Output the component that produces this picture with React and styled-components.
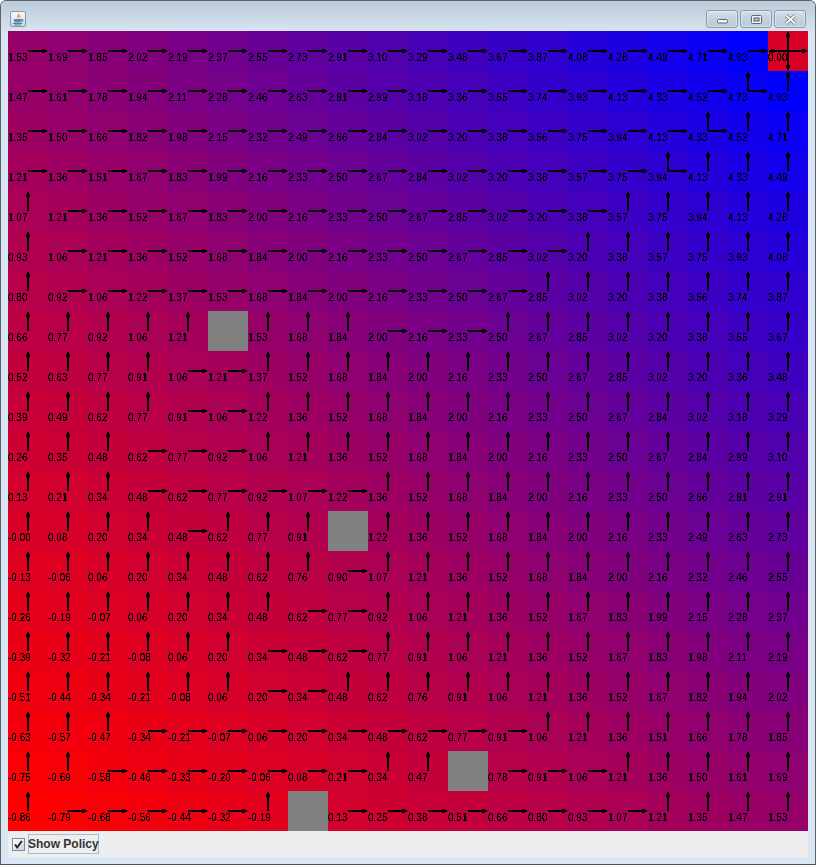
import React from "react";
import styled, { createGlobalStyle } from "styled-components";

const GlobalStyle = createGlobalStyle`
  html, body { margin: 0; padding: 0; background: #fff; }
  * { box-sizing: border-box; }
`;

const VALUES = `
1.53 1.69 1.85 2.02 2.19 2.37 2.55 2.73 2.91 3.10 3.29 3.48 3.67 3.87 4.08 4.28 4.49 4.71 4.93 0.00
1.47 1.61 1.78 1.94 2.11 2.28 2.46 2.63 2.81 2.99 3.18 3.36 3.55 3.74 3.93 4.13 4.33 4.52 4.73 4.93
1.35 1.50 1.66 1.82 1.98 2.15 2.32 2.49 2.66 2.84 3.02 3.20 3.38 3.56 3.75 3.94 4.13 4.33 4.52 4.71
1.21 1.36 1.51 1.67 1.83 1.99 2.16 2.33 2.50 2.67 2.84 3.02 3.20 3.38 3.57 3.75 3.94 4.13 4.33 4.49
1.07 1.21 1.36 1.52 1.67 1.83 2.00 2.16 2.33 2.50 2.67 2.85 3.02 3.20 3.38 3.57 3.75 3.94 4.13 4.28
0.93 1.06 1.21 1.36 1.52 1.68 1.84 2.00 2.16 2.33 2.50 2.67 2.85 3.02 3.20 3.38 3.57 3.75 3.93 4.08
0.80 0.92 1.06 1.22 1.37 1.53 1.68 1.84 2.00 2.16 2.33 2.50 2.67 2.85 3.02 3.20 3.38 3.56 3.74 3.87
0.66 0.77 0.92 1.06 1.21 X 1.53 1.68 1.84 2.00 2.16 2.33 2.50 2.67 2.85 3.02 3.20 3.38 3.55 3.67
0.52 0.63 0.77 0.91 1.06 1.21 1.37 1.52 1.68 1.84 2.00 2.16 2.33 2.50 2.67 2.85 3.02 3.20 3.36 3.48
0.39 0.49 0.62 0.77 0.91 1.06 1.22 1.36 1.52 1.68 1.84 2.00 2.16 2.33 2.50 2.67 2.84 3.02 3.18 3.29
0.26 0.35 0.48 0.62 0.77 0.92 1.06 1.21 1.36 1.52 1.68 1.84 2.00 2.16 2.33 2.50 2.67 2.84 2.99 3.10
0.13 0.21 0.34 0.48 0.62 0.77 0.92 1.07 1.22 1.36 1.52 1.68 1.84 2.00 2.16 2.33 2.50 2.66 2.81 2.91
-0.00 0.08 0.20 0.34 0.48 0.62 0.77 0.91 X 1.22 1.36 1.52 1.68 1.84 2.00 2.16 2.33 2.49 2.63 2.73
-0.13 -0.06 0.06 0.20 0.34 0.48 0.62 0.76 0.90 1.07 1.21 1.36 1.52 1.68 1.84 2.00 2.16 2.32 2.46 2.55
-0.26 -0.19 -0.07 0.06 0.20 0.34 0.48 0.62 0.77 0.92 1.06 1.21 1.36 1.52 1.67 1.83 1.99 2.15 2.28 2.37
-0.39 -0.32 -0.21 -0.08 0.06 0.20 0.34 0.48 0.62 0.77 0.91 1.06 1.21 1.36 1.52 1.67 1.83 1.98 2.11 2.19
-0.51 -0.44 -0.34 -0.21 -0.08 0.06 0.20 0.34 0.48 0.62 0.76 0.91 1.06 1.21 1.36 1.52 1.67 1.82 1.94 2.02
-0.63 -0.57 -0.47 -0.34 -0.21 -0.07 0.06 0.20 0.34 0.48 0.62 0.77 0.91 1.06 1.21 1.36 1.51 1.66 1.78 1.85
-0.75 -0.69 -0.58 -0.46 -0.33 -0.20 -0.06 0.08 0.21 0.34 0.47 X 0.78 0.91 1.06 1.21 1.36 1.50 1.61 1.69
-0.86 -0.79 -0.68 -0.56 -0.44 -0.32 -0.19 X 0.13 0.25 0.38 0.51 0.66 0.80 0.93 1.07 1.21 1.35 1.47 1.53
`.trim().split("\n").map((row) => row.split(" "));

/* Run-length policy: R right, U up, B up+right, A all four, X wall */
const POLICY = [
  "19R 1A", "18R 1B 1U", "17R 1B 2U", "16R 1B 3U", "1U 14R 5U",
  "1U 13R 6U", "1U 12R 7U", "5U 1X 3U 3R 8U", "4U 2R 14U", "4U 2R 14U",
  "3U 3R 14U", "3U 6R 11U", "4U 1R 3U 1X 11U", "8U 1R 11U", "7U 2R 11U",
  "6U 3R 11U", "6U 2R 12U", "3U 10R 7U", "2U 7R 2U 1X 3R 5U", "1U 5R 1U 1X 8R 4U",
].map((row) =>
  row.split(" ").map((run) => run.slice(-1).repeat(parseInt(run, 10))).join("")
);

const DIRECTIONS = { R: [0], U: [270], B: [0, 270], A: [0, 90, 180, 270], X: [] };

const blend = (text) => {
  const t = (parseFloat(text) + 0.86) / (4.93 + 0.86);
  return `rgb(${Math.round(255 * (1 - t))},0,${Math.round(255 * t)})`;
};

const Window = styled.div`
  width: 816px;
  height: 865px;
  display: flex;
  flex-direction: column;
  border: 1px solid #5f6468;
  border-bottom-color: #4c5054;
  border-radius: 6px 6px 0 0;
  background: #d9e6f3;
  overflow: hidden;
`;

const TitleBar = styled.header`
  height: 30px;
  flex: none;
  display: flex;
  align-items: flex-start;
  justify-content: space-between;
  padding: 9px 9px 0 9px;
  background: linear-gradient(#bccbd9, #d6e4f1);
`;

const AppIcon = styled.svg`
  width: 16px;
  height: 16px;
  margin-top: 1px;
  display: block;
`;

const WindowButtons = styled.div`
  display: flex;
  gap: 2px;
`;

const WindowButton = styled.div`
  width: 32px;
  height: 18px;
  display: flex;
  align-items: center;
  justify-content: center;
  border: 1px solid #8a9bac;
  border-radius: 3px;
  background: linear-gradient(#d5e0ea, #c3d1de 50%, #bccbd9);
  box-shadow: inset 0 0 0 1px rgba(255, 255, 255, 0.35);
`;

const GlyphSvg = styled.svg`
  width: 13px;
  height: 11px;
  display: block;
`;

const Content = styled.main`
  flex: 1;
  display: flex;
  flex-direction: column;
  padding: 0 7px;
`;

const Grid = styled.div`
  width: 800px;
  height: 800px;
  flex: none;
  display: grid;
  grid-template-columns: repeat(20, 40px);
  grid-template-rows: repeat(20, 40px);
`;

const Cell = styled.div`
  position: relative;
  padding-top: 22px;
  font: 10px/10px "Liberation Sans", Arial, sans-serif;
  color: #000;
`;

const WallCell = styled.div`
  background: #808080;
`;

const Value = styled.span`
  display: block;
  white-space: nowrap;
  filter: url(#aliased);
`;

const ArrowSvg = styled.svg`
  position: absolute;
  left: 0;
  top: 0;
  width: 40px;
  height: 40px;
  display: block;
  overflow: visible;
  shape-rendering: crispEdges;
`;

const FilterDefs = styled.svg`
  position: absolute;
  width: 0;
  height: 0;
`;

const ControlBar = styled.footer`
  height: 26px;
  width: 800px;
  flex: none;
  display: flex;
  align-items: center;
  padding-left: 4px;
  background: #eeeeee;
`;

const CheckBox = styled.span`
  width: 13px;
  height: 13px;
  flex: none;
  display: flex;
  align-items: center;
  justify-content: center;
  border: 1px solid #7a8ea6;
  background: linear-gradient(135deg, #ffffff, #c6d6e6);
`;

const CheckLabel = styled.label`
  margin-left: 3px;
  width: 71px;
  height: 20px;
  display: flex;
  align-items: center;
  text-indent: -1px;
  border: 1px solid #a3bdd4;
  font: bold 12px/14px "Liberation Sans", Arial, sans-serif;
  color: #333333;
  white-space: nowrap;
`;

const Arrow = ({ angle }) => (
  <ArrowSvg viewBox="0 0 40 40">
    <g transform={`rotate(${angle} 20 20)`}>
      <path d="M20 19H34V18H37V19H39V21H37V22H34V21H20Z" fill="#000" />
    </g>
  </ArrowSvg>
);

const GridCell = ({ text, policy }) =>
  text === "X" ? (
    <WallCell />
  ) : (
    <Cell style={{ background: blend(text) }}>
      <Value>{text}</Value>
      {DIRECTIONS[policy].map((angle) => (
        <Arrow key={angle} angle={angle} />
      ))}
    </Cell>
  );

export default function App() {
  return (
    <>
      <GlobalStyle />
      <FilterDefs aria-hidden="true">
        <filter id="aliased" colorInterpolationFilters="sRGB" x="0" y="0" width="100%" height="100%">
          <feComponentTransfer>
            <feFuncA type="discrete" tableValues="0 0 0 1 1 1 1 1" />
          </feComponentTransfer>
        </filter>
      </FilterDefs>
      <Window>
        <TitleBar>
          <AppIcon viewBox="0 0 16 16">
            <defs>
              <linearGradient id="iconBg" x1="0" y1="0" x2="0" y2="1">
                <stop offset="0" stopColor="#f6f9fc" />
                <stop offset="1" stopColor="#c9d8e6" />
              </linearGradient>
            </defs>
            <rect x="0.5" y="0.5" width="15" height="15" rx="1.5" fill="url(#iconBg)" stroke="#8d9aa6" />
            <path d="M8.5 2C9.5 3.5 6.5 4.5 7.5 6.5C8 7.5 8.5 7.5 8.5 7.5C7.8 6 10.5 5 8.5 2Z" fill="#e2762a" />
            <path d="M10.2 4C10.6 5 9 5.5 9.6 7C10.4 6.2 11.2 5.2 10.2 4Z" fill="#e2762a" />
            <path d="M4 8H11V10C11 11 10 11.5 9 11.5H6C5 11.5 4 11 4 10Z" fill="#5b86b0" />
            <path d="M11 8.5H12.8V10.2H11" fill="none" stroke="#4d7aa6" />
            <path d="M3 12.5H12.5M4.5 14H11" stroke="#4d7aa6" />
          </AppIcon>
          <WindowButtons>
            <WindowButton>
              <GlyphSvg viewBox="0 0 13 11">
                <rect x="1.5" y="5.5" width="10" height="3.5" rx="1" fill="#f4f7fa" stroke="#5a6a7a" />
              </GlyphSvg>
            </WindowButton>
            <WindowButton>
              <GlyphSvg viewBox="0 0 13 11">
                <rect x="1.5" y="1.5" width="10" height="8" rx="1" fill="#eef3f8" stroke="#5a6a7a" />
                <rect x="4" y="4" width="5" height="3" fill="#bccbd9" stroke="#4a5a6a" strokeWidth="1" />
              </GlyphSvg>
            </WindowButton>
            <WindowButton>
              <GlyphSvg viewBox="0 0 13 11">
                <path d="M2 1.5L11 9.5M11 1.5L2 9.5" stroke="#5a6a7a" strokeWidth="3.4" />
                <path d="M2 1.5L11 9.5M11 1.5L2 9.5" stroke="#fbfcfd" strokeWidth="2" />
              </GlyphSvg>
            </WindowButton>
          </WindowButtons>
        </TitleBar>
        <Content>
          <Grid>
            {VALUES.map((row, r) =>
              row.map((text, c) => (
                <GridCell key={`${r}-${c}`} text={text} policy={POLICY[r][c]} />
              ))
            )}
          </Grid>
          <ControlBar>
            <CheckBox>
              <svg width="9" height="9" viewBox="0 0 9 9">
                <path d="M1 4.5L3.2 7.5L7.8 1" fill="none" stroke="#222" strokeWidth="1.9" />
              </svg>
            </CheckBox>
            <CheckLabel>Show Policy</CheckLabel>
          </ControlBar>
        </Content>
      </Window>
    </>
  );
}
